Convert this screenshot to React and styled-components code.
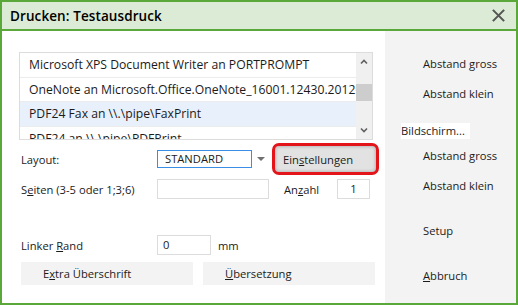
import React from 'react'
import styled, { createGlobalStyle } from 'styled-components'

const Global = createGlobalStyle`
  html, body { margin: 0; padding: 0; background: #fff; }
  body { font-family: "Open Sans", "Noto Sans", sans-serif; font-size: 11.2px; color: #1b1b1b; }
  * { box-sizing: border-box; }
`

const printers = [
  'Microsoft XPS Document Writer an PORTPROMPT',
  'OneNote an Microsoft.Office.OneNote_16001.12430.20120.0_x64',
  'PDF24 Fax an \\\\.\\pipe\\FaxPrint',
  'PDF24 an \\\\.\\pipe\\PDFPrint'
]

const sideItems = [
  { label: 'Abstand gross', top: 21 },
  { label: 'Abstand klein', top: 6 },
  { label: 'Bildschirm...', top: 17, boxed: true },
  { label: 'Abstand gross', top: 5 },
  { label: 'Abstand klein', top: 6 },
  { label: 'Setup', top: 21 },
  { label: <><u>A</u>bbruch</>, top: 21 }
]

const App = () => {
  return <>
    <Global />
    <Window>
      <TitleBar>
        <Title>Drucken: Testausdruck</Title>
        <CloseIcon viewBox="0 0 16 16">
          <path d="M2 2 L14 14 M14 2 L2 14" />
        </CloseIcon>
      </TitleBar>
      <Body>
        <Main>
          <ListBox>
            <Rows>
              {printers.map((p, i) => (
                <Row key={i} selected={i === 2}>{p}</Row>
              ))}
            </Rows>
            <ScrollBar>
              <Arrow viewBox="0 0 8 6"><path d="M1 5 L4 2 L7 5" /></Arrow>
              <Track><Thumb /></Track>
              <Arrow viewBox="0 0 8 6"><path d="M1 1 L4 4 L7 1" /></Arrow>
            </ScrollBar>
          </ListBox>

          <FormRow height={32} top={3}>
            <Label>Layout:</Label>
            <Combo>
              <ComboText>STANDARD</ComboText>
              <ComboArrow><span /></ComboArrow>
            </Combo>
            <HighlightButton>Ein<u>s</u>tellungen</HighlightButton>
          </FormRow>

          <FormRow height={20} top={4}>
            <Label>S<u>e</u>iten (3-5 oder 1;3;6)</Label>
            <Input width={112} />
            <InlineLabel width={68}>An<u>z</u>ahl</InlineLabel>
            <Input width={33} center>1</Input>
          </FormRow>

          <FormRow height={20} top={36}>
            <Label>Linker <u>R</u>and</Label>
            <Input width={54}>0</Input>
            <InlineLabel width={40} pad={7}>mm</InlineLabel>
          </FormRow>

          <ButtonRow>
            <FlatButton>E<u>x</u>tra Überschrift</FlatButton>
            <FlatButton><u>Ü</u>bersetzung</FlatButton>
          </ButtonRow>
        </Main>
        <Side>
          {sideItems.map((it, i) => (
            <SideButton key={i} top={it.top} boxed={it.boxed}>{it.label}</SideButton>
          ))}
        </Side>
      </Body>
    </Window>
  </>
}

const Window = styled.div`
  width: 518px;
  height: 305px;
  border: 2px solid #5aa83a;
  display: flex;
  flex-direction: column;
  overflow: hidden;
`

const TitleBar = styled.div`
  height: 29px;
  background: #dcebd5;
  border-bottom: 2px solid #5aa83a;
  display: flex;
  align-items: center;
  justify-content: space-between;
  padding: 0 8px 0 8px;
`

const Title = styled.div`
  font-family: "Open Sans", sans-serif;
  font-weight: 600;
  font-size: 13.5px;
  color: #000;
  letter-spacing: 0.1px;
`

const CloseIcon = styled.svg`
  width: 15px;
  height: 15px;
  margin-right: 2px;
  path {
    stroke: #555;
    stroke-width: 2.2;
    fill: none;
  }
`

const Body = styled.div`
  flex: 1;
  display: flex;
`

const Main = styled.div`
  flex: 1;
  padding: 21px 0 0 17px;
  display: flex;
  flex-direction: column;
`

const ListBox = styled.div`
  width: 354px;
  height: 88px;
  border: 1px solid #dcdcdc;
  display: flex;
  overflow: hidden;
`

const Rows = styled.div`
  flex: 1;
  overflow: hidden;
`

const Row = styled.div`
  height: 24.5px;
  line-height: 24px;
  padding-left: 9px;
  font-size: 12.2px;
  white-space: nowrap;
  overflow: hidden;
  border-bottom: 1px solid #ececec;
  background: ${p => (p.selected ? '#e8f0fb' : '#fff')};
`

const ScrollBar = styled.div`
  width: 16px;
  background: #f0f0f0;
  display: flex;
  flex-direction: column;
  align-items: stretch;
`

const Arrow = styled.svg`
  width: 16px;
  height: 17px;
  padding: 5px 4px;
  path {
    stroke: #606060;
    stroke-width: 1.6;
    fill: none;
  }
`

const Track = styled.div`
  flex: 1;
  padding-top: 14px;
`

const Thumb = styled.div`
  height: 17px;
  background: #cdcdcd;
`

const FormRow = styled.div`
  height: ${p => p.height}px;
  margin-top: ${p => p.top}px;
  display: flex;
  align-items: center;
`

const Label = styled.div`
  width: 138px;
  padding-left: 2px;
  white-space: nowrap;
`

const InlineLabel = styled.div`
  width: ${p => p.width}px;
  padding-left: ${p => p.pad || 15}px;
  white-space: nowrap;
`

const Combo = styled.div`
  display: flex;
  height: 18px;
  width: 112px;
`

const ComboText = styled.div`
  width: 95px;
  border: 1px solid #3a8ee6;
  padding-left: 7px;
  line-height: 16px;
`

const ComboArrow = styled.div`
  flex: 1;
  display: flex;
  align-items: center;
  justify-content: center;
  span {
    width: 0;
    height: 0;
    border-left: 4px solid transparent;
    border-right: 4px solid transparent;
    border-top: 4px solid #707070;
  }
`

const HighlightButton = styled.div`
  margin-left: 3px;
  width: 107px;
  height: 32px;
  border: 3px solid #e3141a;
  border-radius: 7px;
  background: #e2e2e2;
  box-shadow: inset 0 0 3px 1px rgba(0, 0, 0, 0.18);
  padding-left: 8px;
  display: flex;
  align-items: center;
`

const Input = styled.div`
  width: ${p => p.width}px;
  height: 20px;
  border: 1px solid #dcdcdc;
  line-height: 18px;
  padding-left: ${p => (p.center ? 0 : 5)}px;
  text-align: ${p => (p.center ? 'center' : 'left')};
`

const ButtonRow = styled.div`
  margin-top: 7px;
  display: grid;
  grid-template-columns: 172px 172px;
  gap: 10px;
  padding-left: 2px;
`

const FlatButton = styled.div`
  height: 23px;
  line-height: 23px;
  background: #f3f3f3;
  padding-left: 22px;
`

const Side = styled.div`
  width: 131px;
  background: #f3f3f3;
  display: flex;
  flex-direction: column;
  align-items: flex-start;
`

const SideButton = styled.div`
  margin-top: ${p => p.top}px;
  height: ${p => (p.boxed ? 16 : 24)}px;
  line-height: ${p => (p.boxed ? 16 : 24)}px;
  margin-left: ${p => (p.boxed ? 16 : 38)}px;
  background: ${p => (p.boxed ? '#fff' : 'transparent')};
  padding-right: ${p => (p.boxed ? 5 : 0)}px;
  white-space: nowrap;
`

export default App
